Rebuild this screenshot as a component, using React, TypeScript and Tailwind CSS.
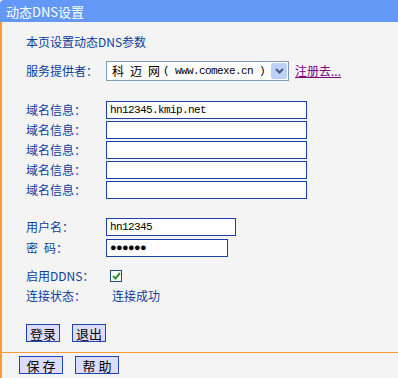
import React from "react"

const label = "text-[#0d3d9e]"
const cjk = "font-['Noto_Sans_CJK_SC','Noto_Sans',sans-serif]"
const mono = "font-['Liberation_Mono','Noto_Sans_CJK_SC',monospace] text-[11px] tracking-[-0.6px] whitespace-nowrap"

function Field({ name, value, width = "w-[201px]" }: { name: React.ReactNode; value?: string; width?: string }) {
  return (
    <div className="flex h-[20px] items-center">
      <span className={`w-[80px] ${label}`}>{name}</span>
      <div className={`flex h-[18px] ${width} items-center border border-[#1d40a8] bg-white px-[3px] ${mono} text-black`}>
        {value}
      </div>
    </div>
  )
}

function Btn({ text, className = "" }: { text: string; className?: string }) {
  return (
    <button className={`flex h-[18px] items-center justify-center border border-[#1f45b0] bg-[#dcdcfc] text-[13px] text-black ${className}`}>
      {text}
    </button>
  )
}

export default function App() {
  return (
    <div className={`flex h-[378px] w-[398px] flex-col bg-[#f4f4f4] text-[12px] leading-none ${cjk}`}>
      <div className="flex h-[22px] items-center rounded-tl-[4px] bg-[#6398f7] pl-[6px] text-[13px] text-white">
        动态DNS设置
      </div>
      <div className="flex flex-1 flex-col border-l-2 border-[#ff9a33]">
        <div className="flex flex-col pl-[24px]">
          <div className={`mt-[14px] h-[12px] ${label}`}>本页设置动态DNS参数</div>

          <div className="mt-[13px] flex h-[20px] items-center">
            <span className={`w-[80px] ${label}`}>服务提供者：</span>
            <div className="flex h-[20px] w-[183px] items-center justify-between border border-[#7f9db9] bg-white pl-[5px] pr-[1px]">
              <span className={`flex items-center ${mono} text-black`}>
                <span className={`${cjk} mr-[6px] text-[12px] tracking-normal`}>科</span>
                <span className={`${cjk} mr-[6px] text-[12px] tracking-normal`}>迈</span>
                <span className={`${cjk} mr-[3px] text-[12px] tracking-normal`}>网</span>
                ( www.comexe.cn )
              </span>
              <span className="flex h-[16px] w-[16px] shrink-0 items-center justify-center rounded-[2px] bg-[#bcd2fa]">
                <svg width="9" height="6" viewBox="0 0 9 6">
                  <path d="M1 1 L4.5 4.5 L8 1" stroke="#4b5e80" strokeWidth="2" fill="none" />
                </svg>
              </span>
            </div>
            <a className="ml-[6px] text-[12px] text-[#800080] underline">注册去...</a>
          </div>

          <div className="mt-[19px] flex flex-col">
            <Field name="域名信息：" value="hn12345.kmip.net" />
            <Field name="域名信息：" />
            <Field name="域名信息：" />
            <Field name="域名信息：" />
            <Field name="域名信息：" />
          </div>

          <div className="mt-[17px] flex flex-col gap-[1px]">
            <Field name="用户名：" value="hn12345" width="w-[130px]" />
            <Field name={<>密<span className="ml-[6px]">码：</span></>} value="●●●●●●" width="w-[122px]" />
          </div>

          <div className="mt-[8px] flex h-[20px] items-center">
            <span className={`w-[84px] ${label}`}>启用DDNS：</span>
            <span className="flex h-[12px] w-[12px] items-center justify-center border border-[#1c4b7e] bg-white">
              <svg width="9" height="8" viewBox="0 0 9 8">
                <path d="M1 4 L3.5 6.5 L8 1" stroke="#2a9a2a" strokeWidth="2" fill="none" />
              </svg>
            </span>
          </div>
          <div className="flex h-[20px] items-center">
            <span className={`w-[86px] ${label}`}>连接状态：</span>
            <span className={label}>连接成功</span>
          </div>

          <div className="mt-[18px] flex gap-[12px]">
            <Btn text="登录" className="w-[34px]" />
            <Btn text="退出" className="w-[34px]" />
          </div>
        </div>

        <div className="mt-[10px] h-[1px] bg-[#ff9a33]" />
        <div className="mt-[3px] flex gap-[12px] pl-[17px]">
          <Btn text="保 存" className="w-[44px]" />
          <Btn text="帮 助" className="w-[44px]" />
        </div>
      </div>
    </div>
  )
}
